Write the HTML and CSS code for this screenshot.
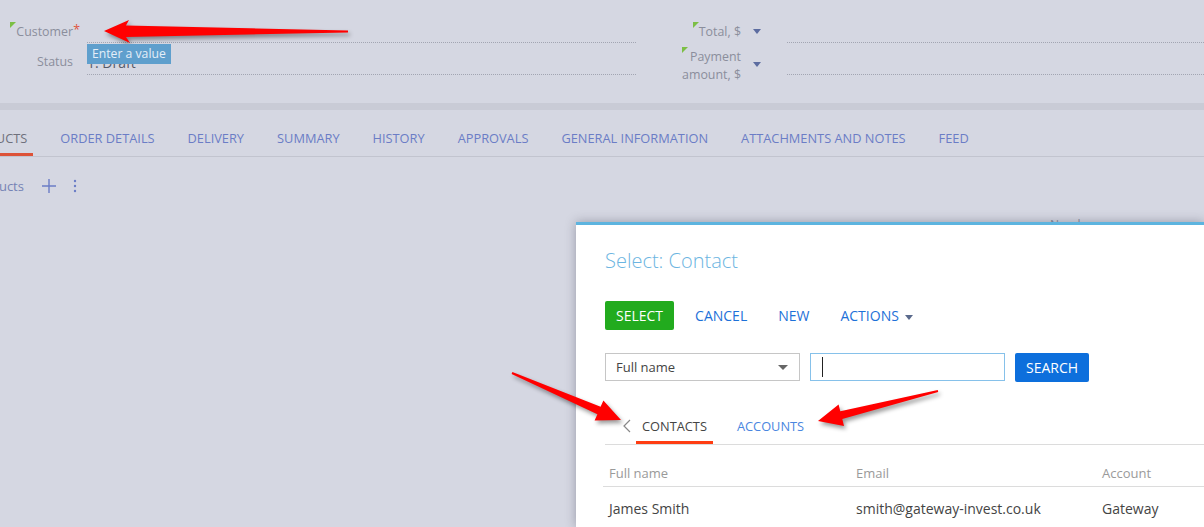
FILE: index.html
```html
<!DOCTYPE html>
<html lang="en">
<head>
  <meta charset="UTF-8" />
  <meta name="viewport" content="width=device-width, initial-scale=1.0" />
  <title>Order</title>
  <link rel="stylesheet" href="styles.css">
</head>
<body>
  <div class="page">
    <div class="summary">
      <div class="label left-label"><span class="cap">Customer<i class="req">*</i></span></div>
      <div class="field">
        <span class="tip">Enter a value</span>
      </div>
      <div class="label"><span class="cap">Total, $</span></div>
      <div class="caret-cell"><span class="caret"></span></div>
      <div class="field"></div>

      <div class="label left-label status">Status</div>
      <div class="field"><span class="value">1. Draft</span></div>
      <div class="label multi"><span class="cap">Payment<br>amount, $</span></div>
      <div class="caret-cell low"><span class="caret"></span></div>
      <div class="field"></div>
    </div>

    <div class="band"></div>

    <nav class="tabs">
      <span class="tab first active">Products</span>
      <span class="tab">Order details</span>
      <span class="tab">Delivery</span>
      <span class="tab">Summary</span>
      <span class="tab">History</span>
      <span class="tab">Approvals</span>
      <span class="tab">General information</span>
      <span class="tab">Attachments and notes</span>
      <span class="tab">Feed</span>
    </nav>

    <div class="detail">
      <span class="detail-caption">Products</span>
      <svg class="add" width="14" height="14" viewBox="0 0 14 14"><path d="M7 0v14M0 7h14" stroke="#6b7dc6" stroke-width="1.4" fill="none"/></svg>
      <svg class="more" width="4" height="14" viewBox="0 0 4 14"><circle cx="2" cy="2" r="1.2" fill="#6b7dc6"/><circle cx="2" cy="7" r="1.2" fill="#6b7dc6"/><circle cx="2" cy="12" r="1.2" fill="#6b7dc6"/></svg>
    </div>

    <div class="grid-head">Number</div>
  </div>

  <!-- lookup dialog -->
  <div class="modal">
    <h2 class="modal-title">Select: Contact</h2>

    <div class="actions">
      <button class="btn btn-green">SELECT</button>
      <button class="btn btn-link">CANCEL</button>
      <button class="btn btn-link">NEW</button>
      <button class="btn btn-link">ACTIONS <span class="dd"></span></button>
    </div>

    <div class="search-row">
      <div class="combo">Full name <span class="combo-caret"></span></div>
      <div class="search-input"><span class="cursor"></span></div>
      <button class="btn btn-blue">SEARCH</button>
    </div>

    <div class="mtabs">
      <svg class="chev" width="8" height="14" viewBox="0 0 8 14"><path d="M7 1L1 7l6 6" stroke="#888" stroke-width="1.2" fill="none"/></svg>
      <span class="mtab active">Contacts</span>
      <span class="mtab">Accounts</span>
    </div>

    <div class="thead">
      <span>Full name</span>
      <span>Email</span>
      <span>Account</span>
    </div>
    <div class="trow">
      <span>James Smith</span>
      <span>smith@gateway-invest.co.uk</span>
      <span>Gateway</span>
    </div>
  </div>

  <!-- pointer arrows -->
  <svg class="marks" width="1204" height="527" viewBox="0 0 1204 527">
    <polygon points="104,31 129,20 126,25.5 348,30.5 348,32.5 126,37 130,43" />
    <polygon points="621,420 594.6,420.6 597.4,414.2 511.6,373.9 512.4,372.1 600.6,406.8 603.4,400.4" />
    <polygon points="818,421 838.6,404.5 840.3,411.3 937.8,390 938.2,392 842.3,419.1 844,425.9" />
  </svg>
</body>
</html>
```

FILE: styles.css
```css
* {
  box-sizing: border-box;
}
body {
  margin: 0;
  height: 527px;
  overflow: hidden;
  position: relative;
  font-family: "Open Sans", Arial, sans-serif;
  background-color: #d5d7e2;
}

/* header fields */
.summary {
  display: grid;
  grid-template-columns: 87px 549px 105px 46px 1fr;
  grid-auto-rows: 32px;
  padding-top: 11px;
  height: 103px;
}
.label {
  font-size: 12.4px;
  line-height: 18px;
  color: #8b8e9c;
  text-align: right;
  padding-top: 12px;
  white-space: nowrap;
}
.left-label {
  padding-right: 14px;
}
.label.status {
  padding-top: 10px;
}
.label.multi {
  padding-top: 5px;
}
.cap {
  position: relative;
  display: inline-block;
}
.cap::before {
  content: "";
  position: absolute;
  left: -6px;
  top: -1px;
  border-top: 6px solid #7cbf45;
  border-right: 6px solid transparent;
}
.multi .cap::before {
  left: 0;
  top: -1px;
}
.req {
  position: absolute;
  right: -7px;
  top: -2px;
  font-style: normal;
  color: #e0553f;
}
.field {
  position: relative;
  border-bottom: 1px dotted #a2a5b2;
}
.value {
  display: block;
  padding-top: 11px;
  line-height: 18px;
  font-size: 14px;
  color: #555a68;
}
.tip {
  position: absolute;
  left: 0;
  top: 33px;
  z-index: 2;
  padding: 0 5px;
  font-size: 12.2px;
  line-height: 20px;
  background-color: #5f9fcd;
  color: #e4eef8;
}
.caret-cell {
  padding: 18px 0 0 12px;
}
.caret-cell.low {
  padding-top: 19px;
}
.caret {
  display: block;
  width: 0;
  border-top: 5px solid #5c6ca0;
  border-left: 4px solid transparent;
  border-right: 4px solid transparent;
}

.band {
  height: 7px;
  background-color: #c9cbd6;
}

/* page tabs */
.tabs {
  display: flex;
  gap: 21px;
  height: 47px;
  margin-left: -45px;
  border-bottom: 1px solid #c2c4cf;
}
.tab {
  padding: 19px 6px 0;
  font-size: 12.8px;
  line-height: 18px;
  text-transform: uppercase;
  color: #6b7dc6;
  white-space: nowrap;
}
.tab.active {
  color: #6e707c;
  box-shadow: inset 0 -3px #dd5238;
}

.detail {
  display: flex;
  align-items: center;
  padding-top: 20px;
  height: 38px;
}
.detail-caption {
  margin-left: -30px;
  font-size: 13px;
  line-height: 18px;
  color: #7683b5;
}
.add {
  margin-left: 18px;
}
.more {
  margin-left: 17px;
}
.grid-head {
  margin: 21px 0 0 1050px;
  font-size: 12px;
  color: #8b8e9c;
}

/* dialog */
.modal {
  position: absolute;
  left: 576px;
  top: 222px;
  right: 0;
  bottom: 0;
  padding-left: 29px;
  background: #fff;
  border-top: 3px solid #5db4df;
  box-shadow: 0 0 10px rgba(40, 44, 60, 0.35);
}
.modal-title {
  margin: 22px 0 0;
  font-size: 20px;
  font-weight: 300;
  line-height: 28px;
  color: #6cb5e1;
}
.actions {
  display: flex;
  gap: 11px;
  margin-top: 26px;
}
.btn {
  height: 29px;
  padding: 0 10px;
  border: none;
  border-radius: 2px;
  font-family: inherit;
  font-size: 14px;
  background: none;
  cursor: pointer;
}
.btn-green {
  padding: 0 11px;
  background-color: #22ab1e;
  color: #fff;
}
.btn-link {
  color: #1d71d8;
}
.dd {
  display: inline-block;
  margin-left: 2px;
  vertical-align: middle;
  border-top: 5px solid #5a6a8c;
  border-left: 4px solid transparent;
  border-right: 4px solid transparent;
}
.search-row {
  display: flex;
  gap: 10px;
  margin-top: 23px;
}
.combo {
  display: flex;
  align-items: center;
  justify-content: space-between;
  width: 195px;
  height: 28px;
  padding: 0 11px 0 10px;
  border: 1px solid #c6c6c6;
  font-size: 13px;
  color: #444;
}
.combo-caret {
  border-top: 5px solid #666;
  border-left: 5px solid transparent;
  border-right: 5px solid transparent;
}
.search-input {
  display: flex;
  align-items: center;
  width: 195px;
  height: 28px;
  padding-left: 11px;
  border: 1px solid #86c1ea;
}
.cursor {
  width: 1px;
  height: 20px;
  background: #222;
}
.btn-blue {
  height: 29px;
  padding: 0 11px;
  background-color: #0d6fdc;
  color: #fff;
}
.mtabs {
  display: flex;
  align-items: flex-end;
  gap: 18px;
  height: 63px;
  border-bottom: 1px solid #dcdcdc;
}
.chev {
  margin: 0 -13px 11px 18px;
}
.mtab {
  padding: 0 6px 9px;
  font-size: 12.8px;
  line-height: 18px;
  text-transform: uppercase;
  color: #4a86e0;
}
.mtab.active {
  color: #444;
  box-shadow: inset 0 -3px #ff3d12;
}
.thead,
.trow {
  display: grid;
  grid-template-columns: 247px 246px 1fr;
  margin-left: -2px;
}
.thead {
  height: 42px;
  padding-top: 19px;
  border-bottom: 1px solid #dcdcdc;
  font-size: 13px;
  line-height: 18px;
  color: #9a9a9a;
}
.trow {
  padding-top: 13px;
  font-size: 14px;
  line-height: 18px;
  color: #444;
}
.thead span,
.trow span {
  padding-left: 6px;
}

.marks {
  position: absolute;
  top: 0;
  left: 0;
  pointer-events: none;
  fill: #ff0000;
  filter: drop-shadow(2px 3px 2px rgba(0, 0, 0, 0.4));
}
```
